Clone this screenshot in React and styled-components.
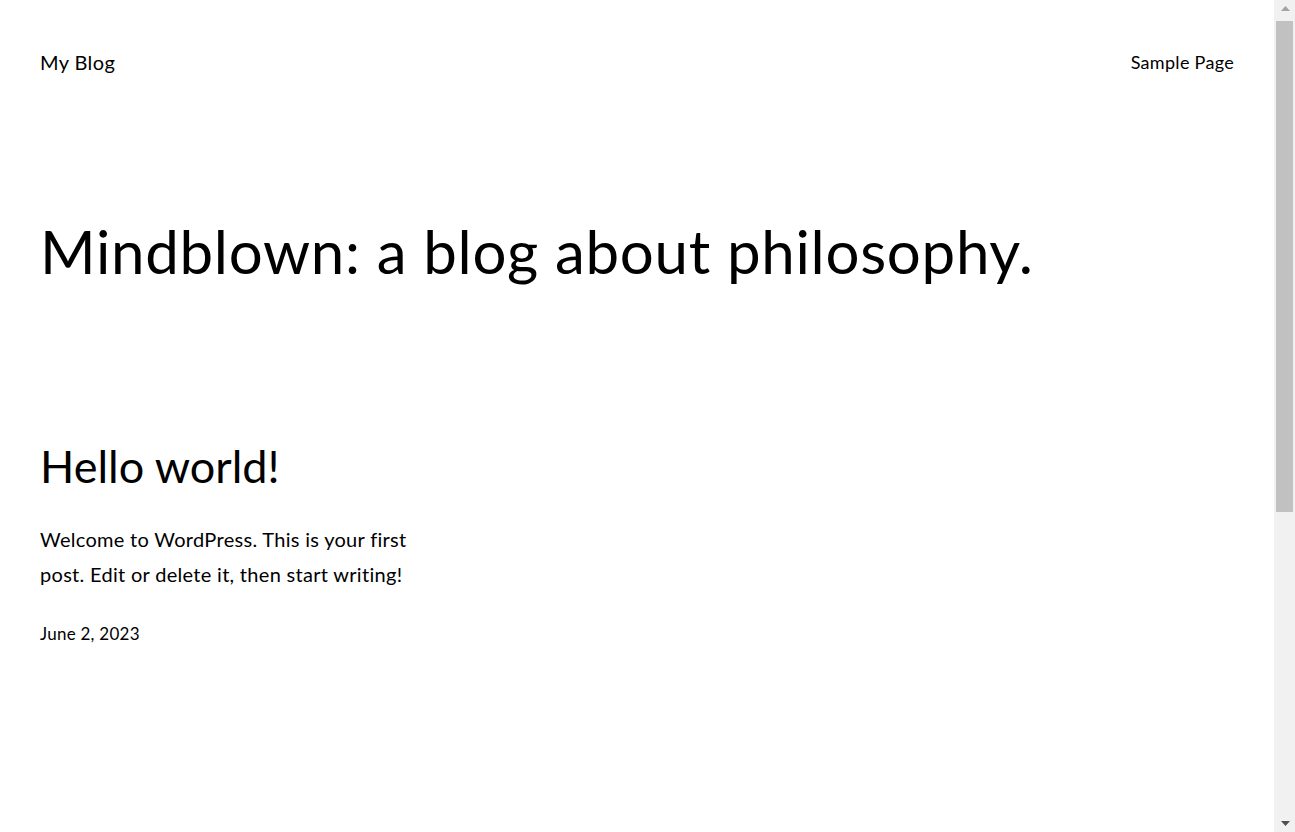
import styled, { createGlobalStyle } from "styled-components";

const Global = createGlobalStyle`
  html, body {
    margin: 0;
    padding: 0;
    background: #fff;
    overflow: hidden;
  }
  body {
    font-family: Lato, "Open Sans", sans-serif;
    color: #000;
  }
`;

const Window = styled.div`
  display: flex;
  height: 832px;
  overflow: hidden;
`;

const Viewport = styled.div`
  flex: 1;
  min-width: 0;
`;

const ScrollBar = styled.div`
  width: 21px;
  flex-shrink: 0;
  display: flex;
  flex-direction: column;
  background: #f1f1f1;
`;

const ScrollButton = styled.div`
  height: 17px;
  display: flex;
  align-items: center;
  justify-content: center;
  padding-left: 1px;
`;

const Track = styled.div`
  flex: 1;
  padding: 4px 2px 0;
`;

const Thumb = styled.div`
  height: 491px;
  background: #c1c1c1;
`;

const Header = styled.header`
  display: flex;
  align-items: center;
  justify-content: space-between;
  height: 36px;
  padding: 44px 40px 0;
`;

const SiteTitle = styled.a`
  font-size: 20px;
  letter-spacing: 0.4px;
  color: #000;
  text-decoration: none;
`;

const NavLink = styled.a`
  font-size: 18px;
  letter-spacing: 0.3px;
  color: #000;
  text-decoration: none;
`;

const Main = styled.main`
  padding: 0 40px;
`;

const Hero = styled.h1`
  margin: 135px 0 0;
  font-size: 60px;
  font-weight: 400;
  line-height: 72px;
  letter-spacing: 0.7px;
`;

const PostGrid = styled.div`
  display: grid;
  grid-template-columns: repeat(3, 1fr);
  column-gap: 30px;
  margin-top: 151px;
`;

const Post = styled.article`
  display: flex;
  flex-direction: column;
`;

const PostTitle = styled.h2`
  margin: 0;
  font-size: 45px;
  font-weight: 400;
  line-height: 56px;
`;

const Excerpt = styled.p`
  margin: 28px 0 0;
  font-size: 20px;
  line-height: 35px;
  letter-spacing: 0.3px;
  max-width: 390px;
`;

const PostDate = styled.time`
  margin-top: 29px;
  font-size: 17px;
  line-height: 26px;
  letter-spacing: 0.25px;
`;

function Arrow({ down }) {
  return (
    <svg width="9" height="5" viewBox="0 0 9 5">
      <path d={down ? "M0 0 L9 0 L4.5 5 Z" : "M0 5 L4.5 0 L9 5 Z"} fill={down ? "#505050" : "#a3a3a3"} />
    </svg>
  );
}

export default function App() {
  return (
    <Window>
      <Global />
      <Viewport>
        <Header>
          <SiteTitle href="#">My Blog</SiteTitle>
          <NavLink href="#">Sample Page</NavLink>
        </Header>
        <Main>
          <Hero>Mindblown: a blog about philosophy.</Hero>
          <PostGrid>
            <Post>
              <PostTitle>Hello world!</PostTitle>
              <Excerpt>
                Welcome to WordPress. This is your first post. Edit or delete
                it, then start writing!
              </Excerpt>
              <PostDate>June 2, 2023</PostDate>
            </Post>
          </PostGrid>
        </Main>
      </Viewport>
      <ScrollBar>
        <ScrollButton>
          <Arrow />
        </ScrollButton>
        <Track>
          <Thumb />
        </Track>
        <ScrollButton>
          <Arrow down />
        </ScrollButton>
      </ScrollBar>
    </Window>
  );
}
